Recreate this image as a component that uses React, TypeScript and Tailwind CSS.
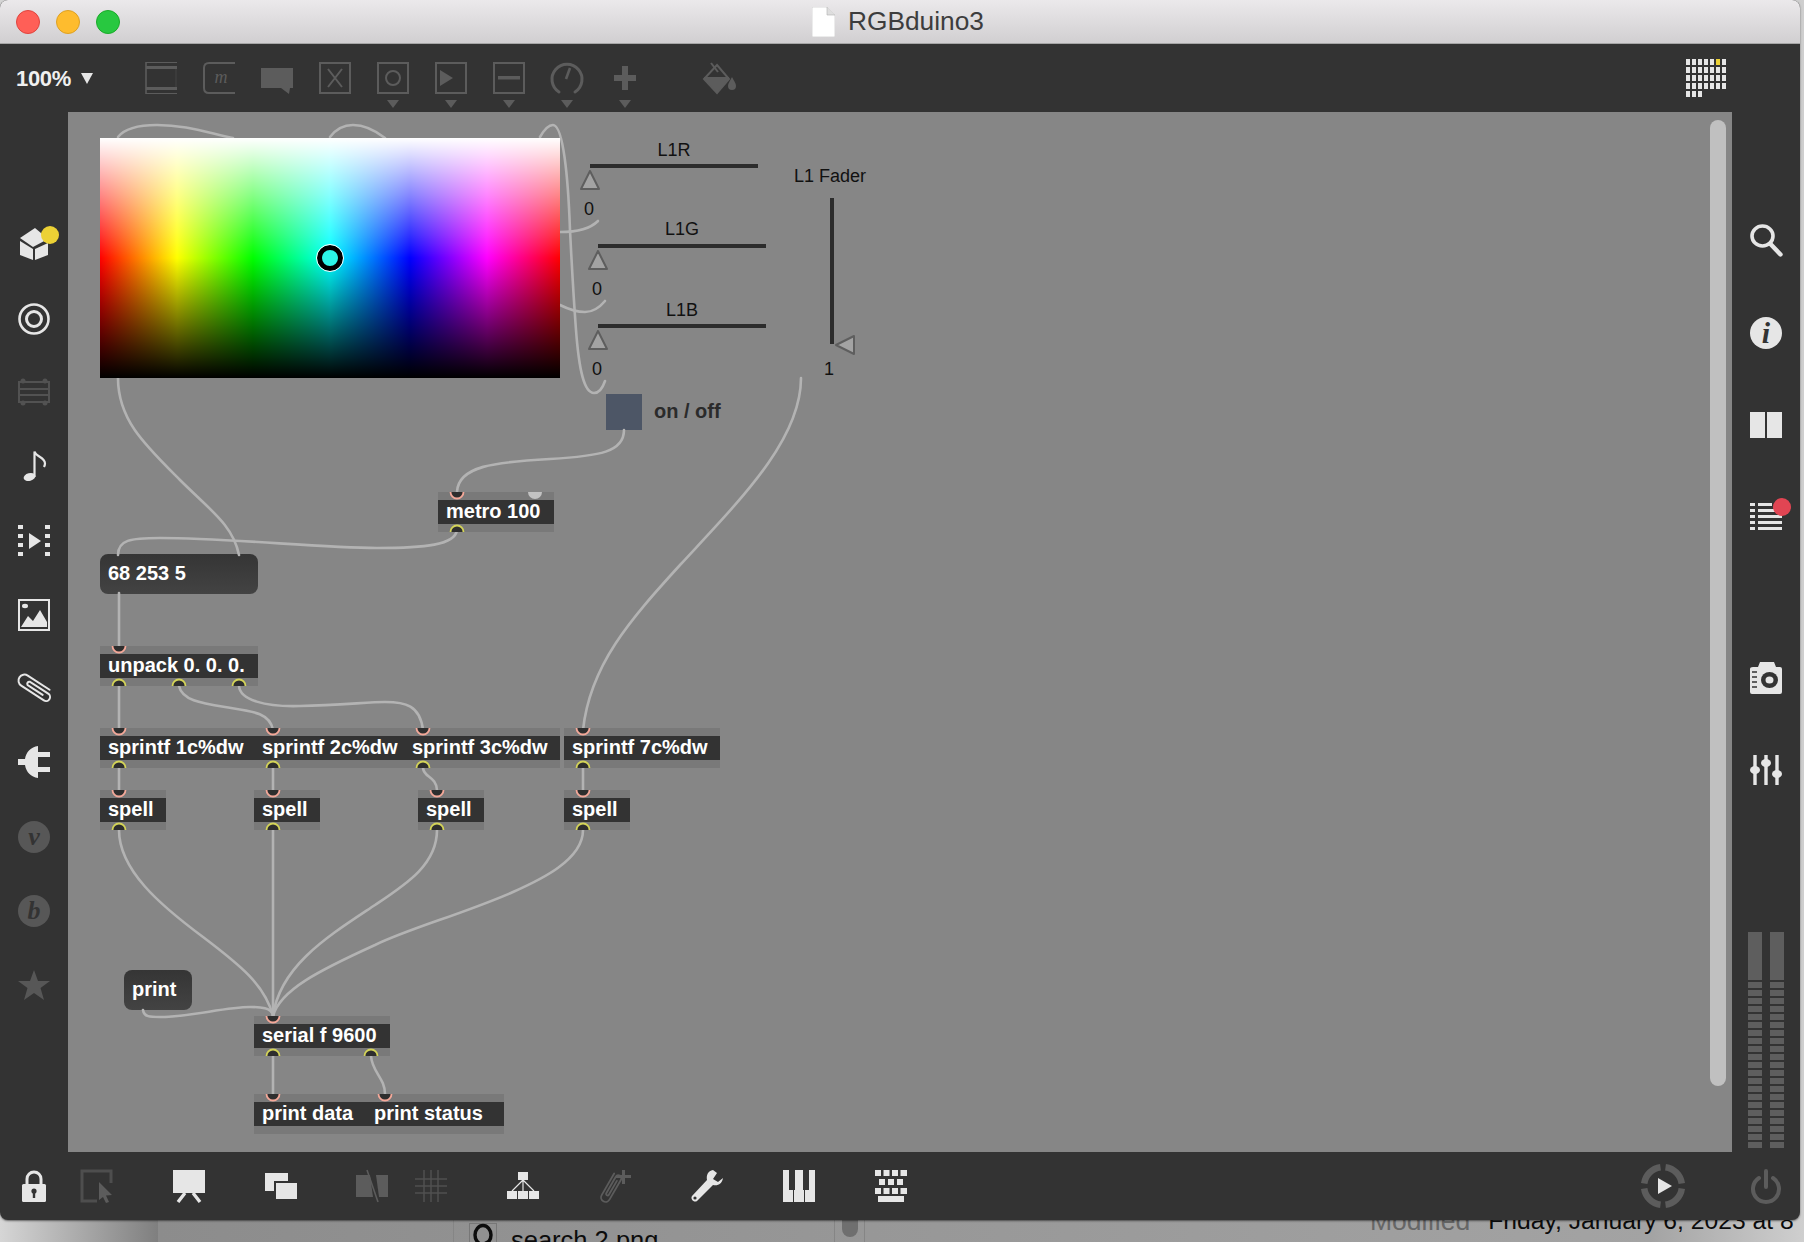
import React from "react";

const ON = "#e6e6e6";
const DIM = "#5c5c5c";

function Ico({ children, w = 32, h = 32, cls = "" }: { children: React.ReactNode; w?: number; h?: number; cls?: string }) {
  return (
    <svg width={w} height={h} viewBox={`0 0 ${w} ${h}`} className={"shrink-0 overflow-visible " + cls}>
      {children}
    </svg>
  );
}

const squareIcon = (inner: React.ReactNode) => (
  <Ico>
    <rect x="1" y="1" width="30" height="30" fill="none" stroke={DIM} strokeWidth="2" />
    {inner}
  </Ico>
);

function Caret() {
  return (
    <svg width="12" height="8" viewBox="0 0 12 8" className="absolute left-[10px] top-[38px]">
      <path d="M0 0H12L6 8Z" fill={DIM} />
    </svg>
  );
}

function TopIcon({ children, caret = false }: { children: React.ReactNode; caret?: boolean }) {
  return (
    <div className="relative h-8 w-8 shrink-0">
      {children}
      {caret && <Caret />}
    </div>
  );
}

function SerifLetter({ t, color, size = 26, x = 16, y = 24 }: { t: string; color: string; size?: number; x?: number; y?: number }) {
  return (
    <text x={x} y={y} textAnchor="middle" fontFamily="'Liberation Serif', serif" fontStyle="italic" fontWeight="bold" fontSize={size} fill={color}>
      {t}
    </text>
  );
}

function Obj({ cls, text }: { cls: string; text: string }) {
  return (
    <div className={"absolute h-[40px] bg-[#797979] pt-[8px] " + cls}>
      <div className="flex h-[24px] items-center whitespace-nowrap bg-[#333333] pb-[2px] pl-[8px] text-[20px] font-bold text-white">{text}</div>
    </div>
  );
}

function Msg({ cls, text }: { cls: string; text: string }) {
  return (
    <div className={"absolute flex h-[40px] items-center rounded-[8px] bg-linear-to-b from-[#353535] to-[#434343] pb-[2px] pl-[8px] text-[20px] font-bold whitespace-nowrap text-white " + cls}>
      {text}
    </div>
  );
}

function Label({ cls, text }: { cls: string; text: string }) {
  return <div className={"absolute h-[24px] w-[100px] text-center text-[18px] leading-[24px] whitespace-nowrap text-[#111111] " + cls}>{text}</div>;
}

const WIRES = [
  "M118 137C125 128 140 125 157 125C185 125 205 132 233 138",
  "M330 137C336 129 344 125 353 125C366 125 376 131 385 138",
  "M540 137C544 130 548 125 553 125C563 125 568 175 570 230C572 270 573 290 576 330C579 370 584 393 594 393C599 393 603 387 605 381",
  "M560 232C575 232 590 229 598 221",
  "M560 305C572 311 580 312 585 312C594 312 600 307 605 301",
  "M118 378C118 420 145 445 180 480C210 510 233 525 239 555",
  "M624 430C624 452 600 456 550 459C495 462 458 466 457 492",
  "M118 555C118 540 130 538 160 538C230 538 320 548 377 548C425 548 455 545 457 530",
  "M119 593V646",
  "M119 686V730",
  "M179 686C182 700 200 703 225 707C250 711 270 712 273 730",
  "M239 686C240 700 265 707 300 706C340 705 370 702 385 702C405 702 420 705 423 730",
  "M119 768V790",
  "M273 768V790",
  "M423 768C424 778 436 776 437 790",
  "M583 768V790",
  "M801 378C801 440 740 500 680 565C630 620 590 665 583 730",
  "M119 830C119 870 160 905 203 937C240 965 265 985 273 1016",
  "M273 830V1016",
  "M437 830C437 865 405 885 375 905C330 935 280 965 273 1016",
  "M583 830C583 860 540 880 513 892C460 915 410 928 375 945C320 970 280 990 273 1016",
  "M143 1010C144 1017 150 1017 160 1017C190 1017 225 1007 250 1007C262 1007 270 1008 273 1014",
  "M273 1056V1094",
  "M371 1056C372 1072 385 1078 385 1094",
];

const INLETS: [number, number][] = [
  [457, 492], [119, 646], [119, 728], [273, 728], [423, 728], [583, 728],
  [119, 790], [273, 790], [437, 790], [583, 790], [273, 1016], [273, 1094], [385, 1094],
];
const OUTLETS: [number, number][] = [
  [457, 532], [119, 686], [179, 686], [239, 686], [119, 768], [273, 768], [423, 768], [583, 768],
  [119, 830], [273, 830], [437, 830], [583, 830], [273, 1056], [371, 1056],
];

function Patch() {
  return (
    <svg width="1664" height="1040" viewBox="68 112 1664 1040" className="absolute left-0 top-0">
      <g fill="none" stroke="#b3b3b3" strokeWidth="2.6" strokeLinecap="round">
        {WIRES.map((d, i) => (
          <path key={i} d={d} />
        ))}
      </g>
      <path d="M528 492A7 7 0 0 0 542 492Z" fill="#c2c2c2" />
      {INLETS.map(([x, y], i) => (
        <g key={i}>
          <path d={`M${x - 6.5} ${y}A6.5 6.5 0 0 0 ${x + 6.5} ${y}Z`} fill="#2e2e2e" />
          <path d={`M${x - 6.5} ${y}A6.5 6.5 0 0 0 ${x + 6.5} ${y}`} fill="none" stroke="#f4a899" strokeWidth="1.8" />
        </g>
      ))}
      {OUTLETS.map(([x, y], i) => (
        <g key={i}>
          <path d={`M${x - 6.5} ${y}A6.5 6.5 0 0 1 ${x + 6.5} ${y}Z`} fill="#2e2e2e" />
          <path d={`M${x - 6.5} ${y}A6.5 6.5 0 0 1 ${x + 6.5} ${y}`} fill="none" stroke="#d4d458" strokeWidth="1.8" />
        </g>
      ))}
      <g fill="#a3a3a3" stroke="#5e5e5e" strokeWidth="2" strokeLinejoin="round">
        <path d="M590 171L581 189H599Z" />
        <path d="M598 251L589 269H607Z" />
        <path d="M598 331L589 349H607Z" />
        <path d="M836 345L854 336V354Z" />
      </g>
    </svg>
  );
}

function LeftBar() {
  return (
    <div className="flex w-[68px] shrink-0 flex-col items-center gap-[42px] pt-[116px]">
      <Ico>
        <path d="M2 10L17 0L30 11L15 19Z" fill={ON} />
        <path d="M2 13L15 21V32L2 27Z" fill={ON} />
        <path d="M17 21L30 15V27L17 32Z" fill={ON} />
        <circle cx="32" cy="7" r="9" fill="#ecd135" />
      </Ico>
      <Ico>
        <circle cx="16" cy="17" r="14.5" fill="none" stroke={ON} strokeWidth="2.6" />
        <circle cx="16" cy="17" r="7.5" fill="none" stroke={ON} strokeWidth="3" />
      </Ico>
      <Ico>
        <rect x="1" y="6" width="30" height="20" fill="none" stroke="#525252" strokeWidth="2" />
        <path d="M1 13H31M1 19H31" stroke="#525252" strokeWidth="2" />
        <circle cx="5" cy="5" r="2.5" fill="#525252" />
        <circle cx="27" cy="5" r="2.5" fill="#525252" />
        <circle cx="5" cy="27" r="2.5" fill="#525252" />
        <circle cx="27" cy="27" r="2.5" fill="#525252" />
      </Ico>
      <Ico>
        <ellipse cx="11.5" cy="27" rx="6" ry="3.8" transform="rotate(-15 11.5 27)" fill={ON} />
        <path d="M16.5 27V1.5C18 7 27 7 27 13.5C27 15 26.5 16 26 17" fill="none" stroke={ON} strokeWidth="2.2" />
      </Ico>
      <Ico>
        <path d="M0 1H5V5H0ZM0 10H5V14H0ZM0 19H5V23H0ZM0 28H5V32H0ZM27 1H32V5H27ZM27 10H32V14H27ZM27 19H32V23H27ZM27 28H32V32H27Z" fill={ON} />
        <path d="M11 9L23 17L11 25Z" fill={ON} />
      </Ico>
      <Ico>
        <rect x="1" y="2" width="30" height="30" fill="none" stroke={ON} strokeWidth="2" />
        <ellipse cx="7" cy="8" rx="3" ry="2.2" fill={ON} />
        <path d="M3 29L10 18L15 23L22 12L29 24V29Z" fill={ON} />
      </Ico>
      <Ico>
        <path
          transform="rotate(33 16 16)"
          d="M30 9H4A6 6 0 0 0 4 21H31A4 4 0 0 0 31 13H9A2.2 2.2 0 0 0 9 17H27"
          fill="none"
          stroke={ON}
          strokeWidth="2"
          strokeLinecap="round"
        />
      </Ico>
      <Ico>
        <path d="M0 13H7C8 6 13 1 20 0V32C13 31 8 26 7 19H0Z" fill={ON} />
        <path d="M20 6H32V11H20ZM20 21H32V26H20Z" fill={ON} />
      </Ico>
      <Ico>
        <circle cx="16" cy="17" r="16" fill="#575757" />
        <SerifLetter t="v" color="#333333" y={25} />
      </Ico>
      <Ico>
        <circle cx="16" cy="17" r="16" fill="#575757" />
        <SerifLetter t="b" color="#333333" y={25} />
      </Ico>
      <Ico>
        <path d="M16 2L20 13H32L22.5 20L26 32L16 25L6 32L9.5 20L0 13H12Z" fill="#575757" />
      </Ico>
    </div>
  );
}

function Meter() {
  const segs = Array.from({ length: 21 });
  return (
    <div className="flex w-[14px] flex-col gap-[2px]">
      <div className="h-[48px] bg-[#5e5e5e]" />
      {segs.map((_, i) => (
        <div key={i} className="h-[6px] bg-[#5e5e5e]" />
      ))}
    </div>
  );
}

function RightBar() {
  return (
    <div className="flex w-[68px] shrink-0 flex-col items-center pt-[112px] pb-[4px]">
      <Ico>
        <ellipse cx="12.5" cy="12" rx="10.5" ry="10" fill="none" stroke={ON} strokeWidth="3.6" />
        <path d="M20 19.5L30.5 30.5" stroke={ON} strokeWidth="4.4" strokeLinecap="round" />
      </Ico>
      <div className="mt-[61px]">
        <Ico>
          <circle cx="16" cy="16" r="16" fill={ON} />
          <SerifLetter t="i" color="#333333" size={30} y={26} />
        </Ico>
      </div>
      <div className="mt-[60px]">
        <Ico>
          <path d="M0 3H15V29H0ZM17 3H32V29H17Z" fill={ON} />
        </Ico>
      </div>
      <div className="relative mt-[58px]">
        <Ico>
          <path d="M0 4H5V7H0ZM8 4H22V7H8ZM0 10H5V13H0ZM8 10H26V13H8ZM0 16H5V19H0ZM8 16H32V19H8ZM0 22H5V25H0ZM8 22H32V25H8ZM0 28H5V31H0ZM8 28H32V31H8Z" fill={ON} />
        </Ico>
        <span className="absolute left-[23px] top-[-1px] h-[18px] w-[18px] rounded-full bg-[#e14553]" />
      </div>
      <div className="mt-[130px]">
        <Ico>
          <path d="M3 6H8L10 1H24L26 6H30Q32 6 32 8V31Q32 33 30 33H2Q0 33 0 31V8Q0 6 3 6Z" fill={ON} />
          <ellipse cx="19.5" cy="19" rx="8.5" ry="8" fill="#333333" />
          <ellipse cx="19.5" cy="19" rx="4" ry="3.6" fill={ON} />
          <path d="M2 11H7M2 16H7M2 21H7M2 26H7" stroke="#333333" strokeWidth="1.6" />
        </Ico>
      </div>
      <div className="mt-[61px]">
        <Ico>
          <path d="M5 1V31M16 1V31M27 1V31" stroke={ON} strokeWidth="3.4" />
          <ellipse cx="5" cy="16" rx="5" ry="4" fill={ON} />
          <ellipse cx="16" cy="9" rx="5" ry="4" fill={ON} />
          <ellipse cx="27" cy="20" rx="5" ry="4" fill={ON} />
        </Ico>
      </div>
      <div className="mt-auto flex gap-[8px]">
        <Meter />
        <Meter />
      </div>
    </div>
  );
}

function GridMenu() {
  const rows = [7, 7, 7, 7, 3];
  return (
    <div className="mr-[74px] ml-auto flex flex-col gap-[2px]">
      {rows.map((n, r) => (
        <div key={r} className="flex gap-[2px]">
          {Array.from({ length: n }).map((_, c) => (
            <span key={c} className={r === 0 && c === 5 ? "h-[6px] w-[4px] bg-[#ecd135]" : "h-[6px] w-[4px] bg-[#e6e6e6]"} />
          ))}
        </div>
      ))}
    </div>
  );
}

export default function App() {
  return (
    <div className="relative h-[1242px] w-[1804px] overflow-hidden bg-[linear-gradient(to_right,#d6d6d6_0px,#7f7f7f_158px,#8c8c8c_158px,#a3a3a3_1650px,#cfcfcf_1804px)] font-['Liberation_Sans',sans-serif]">
      {/* desktop content seen behind the window */}
      <div className="flex h-[1242px] items-start pt-[1200px] text-[#0c0c0c]">
        <div className="ml-[453px] flex h-[42px] w-[382px] items-start gap-[14px] border-x border-[#858585] pt-[23px] pl-[15px]">
          <div className="flex h-[26px] w-[28px] items-center justify-center border border-[#777777]">
            <svg width="22" height="24" viewBox="0 0 22 24" className="overflow-visible">
              <ellipse cx="11" cy="11" rx="8" ry="9.5" fill="none" stroke="#0c0c0c" strokeWidth="3.4" />
              <path d="M14 17L19 26" stroke="#0c0c0c" strokeWidth="3.4" />
            </svg>
          </div>
          <span className="mt-[2px] text-[25.5px] leading-[30px] whitespace-nowrap">search 2.png</span>
        </div>
        <div className="ml-[7px] h-[37px] w-[16px] rounded-b-[8px] bg-[#6f6f6f]" />
        <div className="ml-[6px] h-[42px] w-px bg-[#858585]" />
        <span className="mt-[6px] ml-[505px] text-[26.5px] leading-[30px] whitespace-nowrap text-[#666666]">Modified</span>
        <span className="mt-[6px] ml-[18px] text-[24.7px] leading-[30px] whitespace-nowrap">Friday, January 6, 2023 at 8</span>
      </div>

      {/* window */}
      <div className="absolute left-0 top-0 flex h-[1220px] w-[1800px] flex-col overflow-hidden rounded-[8px] bg-[#333333] shadow-[0_1px_2px_rgba(0,0,0,0.5)]">
        {/* title bar */}
        <div className="flex h-[44px] shrink-0 items-center border-b border-[#a6a6a6] bg-linear-to-b from-[#ebe9eb] to-[#d1cfd1] pl-[16px]">
          <span className="h-[24px] w-[24px] rounded-full border border-[#e0443e] bg-[#ff5f57]" />
          <span className="ml-[16px] h-[24px] w-[24px] rounded-full border border-[#dea123] bg-[#febc2e]" />
          <span className="ml-[16px] h-[24px] w-[24px] rounded-full border border-[#1aab29] bg-[#28c840]" />
          <svg width="23" height="30" viewBox="0 0 23 30" className="ml-[692px] shrink-0">
            <path d="M0 0H15L23 8V30H0Z" fill="#ffffff" stroke="#c0c0c0" strokeWidth="0.6" />
            <path d="M15 0V8H23" fill="#dedede" stroke="#b0b0b0" strokeWidth="0.6" />
          </svg>
          <span className="ml-[13px] text-[26.3px] leading-none text-[#3d3d3d]">RGBduino3</span>
        </div>

        {/* top toolbar */}
        <div className="flex h-[68px] shrink-0 items-center pl-[16px]">
          <span className="w-[54px] text-[22px] font-bold tracking-[-0.3px] whitespace-nowrap text-[#f0f0f0]">100%</span>
          <svg width="12" height="11" viewBox="0 0 12 11" className="ml-[11px] shrink-0">
            <path d="M0 0H12L6 11Z" fill="#e6e6e6" />
          </svg>
          <div className="ml-[52px] flex gap-[26px]">
            <TopIcon>
              <Ico>
                <path d="M1 0V32" stroke={DIM} strokeWidth="1.6" />
                <path d="M31 7V25" stroke="#4a4a4a" strokeWidth="0.8" />
                <path d="M1 0.5H32M1 31.5H32" stroke={DIM} strokeWidth="1.2" />
                <rect x="1" y="4" width="31" height="3" fill={DIM} />
                <rect x="1" y="25" width="31" height="3" fill={DIM} />
              </Ico>
            </TopIcon>
            <TopIcon>
              <Ico>
                <path d="M32 1H6Q1 1 1 6V26Q1 31 6 31H32" fill="none" stroke={DIM} strokeWidth="2" />
                <text x="18" y="21" textAnchor="middle" fontFamily="'Liberation Serif', serif" fontStyle="italic" fontSize="18" fill={DIM}>m</text>
              </Ico>
            </TopIcon>
            <TopIcon>
              <Ico>
                <path d="M0 6H32V26H29L28 32L20 26H0Z" fill={DIM} />
              </Ico>
            </TopIcon>
            <TopIcon>
              {squareIcon(<path d="M9 7L23 25M23 7L9 25" stroke={DIM} strokeWidth="2" />)}
            </TopIcon>
            <TopIcon caret>
              {squareIcon(<circle cx="16" cy="16" r="7" fill="none" stroke={DIM} strokeWidth="2" />)}
            </TopIcon>
            <TopIcon caret>
              {squareIcon(<path d="M5 8L18 16L5 24Z" fill={DIM} />)}
            </TopIcon>
            <TopIcon caret>
              {squareIcon(<rect x="5" y="14" width="22" height="3.5" fill={DIM} />)}
            </TopIcon>
            <TopIcon caret>
              <Ico>
                <path d="M8 30A15 15 0 1 1 24 30" fill="none" stroke={DIM} strokeWidth="3" strokeLinecap="round" />
                <path d="M19 6L15 17" stroke={DIM} strokeWidth="2.6" />
              </Ico>
            </TopIcon>
            <TopIcon caret>
              <Ico>
                <path d="M13 4H19V13H27V19H19V28H13V19H5V13H13Z" fill={DIM} />
              </Ico>
            </TopIcon>
          </div>
          <div className="ml-[60px]">
            <Ico w={34}>
              <path d="M16 3L28 17L16 31L3 17Z" fill="none" stroke={DIM} strokeWidth="2" />
              <path d="M10 1L17 10" stroke={DIM} strokeWidth="2" />
              <path d="M3 15H28V17L16 31L3 17Z" fill={DIM} />
              <path d="M31 15C33 19 35 21 35 24A3.8 3.8 0 0 1 27 24C27 21 29 19 31 15Z" fill={DIM} />
            </Ico>
          </div>
          <GridMenu />
        </div>

        {/* middle row */}
        <div className="flex min-h-0 flex-1">
          <LeftBar />
          <div className="relative flex-1 overflow-hidden bg-[#868686] text-[#111111]">
            {/* slider lines */}
            <div className="absolute left-[522px] top-[52px] h-[4px] w-[168px] bg-[#2c2c2c]" />
            <div className="absolute left-[530px] top-[132px] h-[4px] w-[168px] bg-[#2c2c2c]" />
            <div className="absolute left-[530px] top-[212px] h-[4px] w-[168px] bg-[#2c2c2c]" />
            <div className="absolute left-[762px] top-[86px] h-[146px] w-[4px] bg-[#2c2c2c]" />

            <Label cls="left-[556px] top-[26px]" text="L1R" />
            <Label cls="left-[564px] top-[105px]" text="L1G" />
            <Label cls="left-[564px] top-[186px]" text="L1B" />
            <Label cls="left-[712px] top-[52px]" text="L1 Fader" />
            <Label cls="left-[471px] top-[85px]" text="0" />
            <Label cls="left-[479px] top-[165px]" text="0" />
            <Label cls="left-[479px] top-[245px]" text="0" />
            <Label cls="left-[711px] top-[245px]" text="1" />

            {/* toggle */}
            <div className="absolute left-[538px] top-[282px] h-[36px] w-[36px] bg-[#4d5666]" />
            <div className="absolute left-[586px] top-[287px] text-[20px] leading-[24px] font-bold whitespace-nowrap text-[#2b2b2b]">on / off</div>

            {/* objects */}
            <Obj cls="left-[370px] top-[380px] w-[116px]" text="metro 100" />
            <Msg cls="left-[32px] top-[442px] w-[158px]" text="68 253 5" />
            <Obj cls="left-[32px] top-[534px] w-[158px]" text="unpack 0. 0. 0." />
            <Obj cls="left-[32px] top-[616px] w-[154px]" text="sprintf 1c%dw" />
            <Obj cls="left-[186px] top-[616px] w-[151px]" text="sprintf 2c%dw" />
            <Obj cls="left-[336px] top-[616px] w-[156px]" text="sprintf 3c%dw" />
            <Obj cls="left-[496px] top-[616px] w-[156px]" text="sprintf 7c%dw" />
            <Obj cls="left-[32px] top-[678px] w-[66px]" text="spell" />
            <Obj cls="left-[186px] top-[678px] w-[66px]" text="spell" />
            <Obj cls="left-[350px] top-[678px] w-[66px]" text="spell" />
            <Obj cls="left-[496px] top-[678px] w-[66px]" text="spell" />
            <Msg cls="left-[56px] top-[858px] w-[68px]" text="print" />
            <Obj cls="left-[186px] top-[904px] w-[136px]" text="serial f 9600" />
            <Obj cls="left-[186px] top-[982px] w-[112px]" text="print data" />
            <Obj cls="left-[298px] top-[982px] w-[138px]" text="print status" />

            <Patch />

            {/* colour picker */}
            <div className="absolute left-[32px] top-[26px] h-[240px] w-[460px] bg-[linear-gradient(to_bottom,#fff_0%,rgba(255,255,255,0)_50%,rgba(0,0,0,0)_50%,#000_100%),linear-gradient(to_right,#f00_0px,#ff0_77px,#0f0_153px,#0ff_230px,#00f_310px,#f0f_387px,#f00_460px)]">
              <div className="absolute left-[217px] top-[107px] h-[26px] w-[26px] rounded-full border-[5px] border-black bg-[#2cf5e8] outline outline-white" />
            </div>

            {/* scrollbar */}
            <div className="absolute left-[1642px] top-[8px] h-[966px] w-[16px] rounded-full bg-[#c0c0c0]" />
          </div>
          <RightBar />
        </div>

        {/* bottom toolbar */}
        <div className="flex h-[68px] shrink-0 items-center pl-[22px]">
          <Ico w={24}>
            <path d="M5 15V9A7 7 0 0 1 19 9V15" fill="none" stroke={ON} strokeWidth="3" />
            <rect x="0" y="14" width="24" height="18" rx="1.5" fill={ON} />
            <circle cx="12" cy="21" r="2.6" fill="#333333" />
            <rect x="10.8" y="21" width="2.4" height="7" fill="#333333" />
          </Ico>
          <div className="ml-[35px]">
            <Ico>
              <path d="M30 13V1H1V31H16" fill="none" stroke="#4e4e4e" strokeWidth="3" />
              <path d="M18 12L31 25L25 25.5L28 32L25 33L22 27L18 30Z" fill={DIM} />
            </Ico>
          </div>
          <div className="ml-[60px]">
            <Ico>
              <rect x="0" y="0" width="32" height="23" fill={ON} />
              <path d="M12 23L5 32M20 23L27 32" stroke={ON} strokeWidth="3.4" />
            </Ico>
          </div>
          <div className="ml-[60px]">
            <Ico>
              <path d="M0 3H23V11H9V21H0Z" fill={ON} />
              <rect x="11" y="13" width="21" height="16" fill={ON} />
            </Ico>
          </div>
          <div className="ml-[59px]">
            <Ico>
              <path d="M0 5H14L17 27H0Z" fill={DIM} />
              <path d="M20 5H32V27H23Z" fill={DIM} />
              <path d="M11 0L22 32" stroke={DIM} strokeWidth="1.6" />
            </Ico>
          </div>
          <div className="ml-[27px]">
            <Ico>
              <path d="M9 0V32M16 0V32M23 0V32M0 9H32M0 16H32M0 23H32" stroke="#505050" strokeWidth="1.5" />
            </Ico>
          </div>
          <div className="ml-[60px]">
            <Ico>
              <path d="M11 2H21V10H11Z" fill={ON} />
              <path d="M16 10L5 21M16 10V21M16 10L27 21" stroke={ON} strokeWidth="1.2" />
              <path d="M0 21H10V29H0ZM11 21H21V29H11ZM22 21H32V29H22Z" fill={ON} />
            </Ico>
          </div>
          <div className="ml-[60px]">
            <Ico>
              <path
                transform="rotate(-60 12 19)"
                d="M27 14H2A4.5 4.5 0 0 0 2 23H25A3 3 0 0 0 25 17H6A1.5 1.5 0 0 0 6 20H22"
                fill="none"
                stroke={DIM}
                strokeWidth="1.8"
                strokeLinecap="round"
              />
              <path d="M23 0H26V5H32V8H26V14H23V8H17V5H23Z" fill={DIM} />
            </Ico>
          </div>
          <div className="ml-[60px]">
            <Ico>
              <path d="M22 0C17 1 15 5 16 10L1 26C-1 29 3 33 6 31L22 15C27 16 31 14 32 8L27 12L22 9L26 3Z" fill={ON} />
              <circle cx="4" cy="28" r="1.6" fill="#333333" />
            </Ico>
          </div>
          <div className="ml-[60px]">
            <Ico>
              <path d="M0 0H6V20H10V32H0ZM12 0H20V20H21V32H11V20H12ZM26 0H32V32H22V20H26Z" fill={ON} />
            </Ico>
          </div>
          <div className="ml-[60px]">
            <Ico>
              <path d="M0 0H6V6H0ZM8.5 0H14.5V6H8.5ZM17 0H23V6H17ZM25.5 0H32V6H25.5ZM4 9H10V15H4ZM13 9H19V15H13ZM22 9H28V15H22ZM0 18H6V24H0ZM8.5 18H14.5V24H8.5ZM17 18H23V24H17ZM25.5 18H32V24H25.5ZM3 26H29V32H3Z" fill={ON} />
            </Ico>
          </div>
          <div className="ml-auto">
            <Ico w={44} h={44}>
              <g fill="none" stroke={DIM} strokeWidth="6.5">
                <path d="M24.5 3.2A19 19 0 0 1 40.8 19.5" />
                <path d="M40.8 24.5A19 19 0 0 1 24.5 40.8" />
                <path d="M19.5 40.8A19 19 0 0 1 3.2 24.5" />
                <path d="M3.2 19.5A19 19 0 0 1 19.5 3.2" />
              </g>
              <path d="M17 14L31 22L17 30Z" fill={ON} />
            </Ico>
          </div>
          <div className="mr-[18px] ml-[65px]">
            <Ico>
              <path d="M9 8A13 13 0 1 0 23 8" fill="none" stroke={DIM} strokeWidth="4" strokeLinecap="round" />
              <path d="M16 1V17" stroke={DIM} strokeWidth="4" strokeLinecap="round" />
            </Ico>
          </div>
        </div>
      </div>
    </div>
  );
}
